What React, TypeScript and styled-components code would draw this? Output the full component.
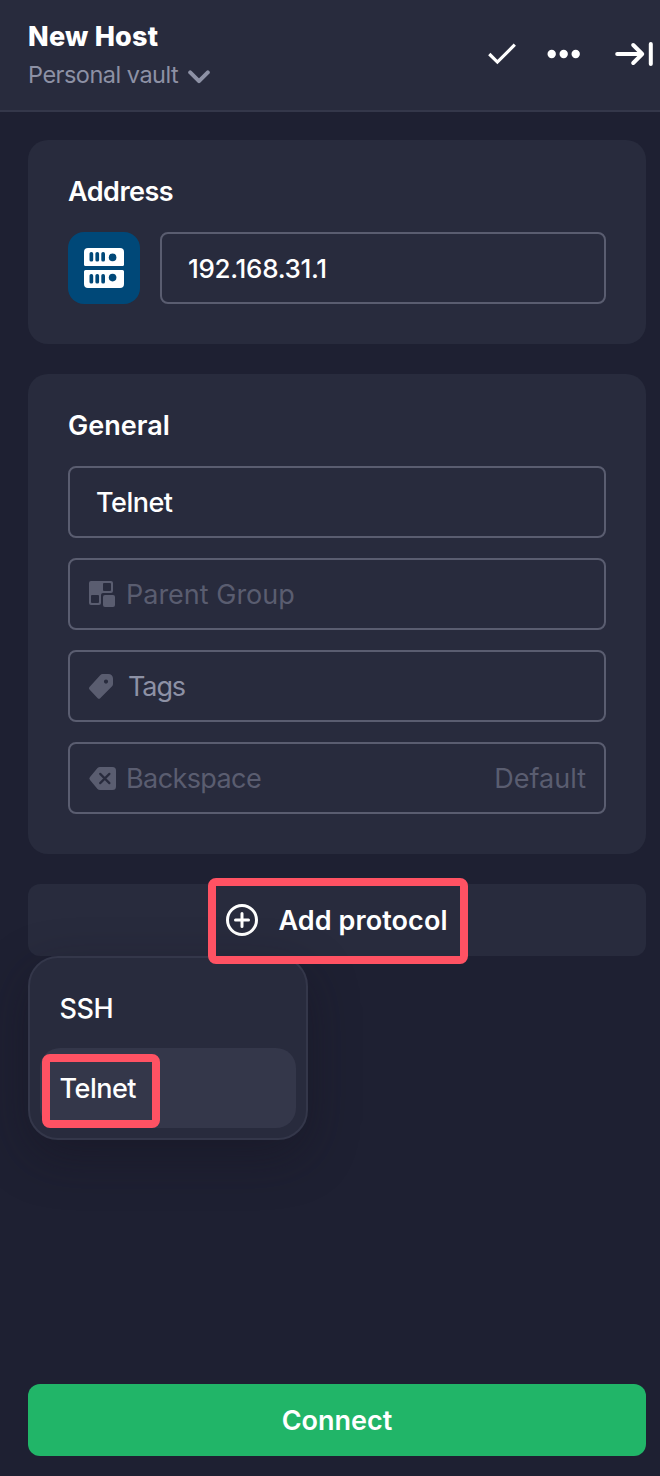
import React from 'react';
import styled, { createGlobalStyle } from 'styled-components';

const GlobalStyle = createGlobalStyle`
  * { box-sizing: border-box; }
  body {
    margin: 0;
    background: #1e2032;
    font-family: Inter, "Liberation Sans", sans-serif;
    color: #fff;
  }
`;

const Panel = styled.div`
  display: flex;
  flex-direction: column;
  width: 660px;
  height: 1476px;
  background: #1e2032;
  overflow: hidden;
`;

const Header = styled.header`
  display: flex;
  justify-content: space-between;
  height: 112px;
  padding: 0 6px 0 28px;
  background: #282b3d;
  border-bottom: 2px solid #34374a;
`;

const Heading = styled.div`
  display: flex;
  flex-direction: column;
  padding-top: 19px;
`;

const Text = styled.span<{ $size?: number; $weight?: number; $color?: string; $spacing?: number }>`
  font-size: ${p => p.$size ?? 27}px;
  font-weight: ${p => p.$weight ?? 400};
  color: ${p => p.$color ?? '#fff'};
  letter-spacing: ${p => p.$spacing ?? 0}px;
  line-height: 36px;
  white-space: nowrap;
`;

const VaultRow = styled.div`
  display: flex;
  align-items: center;
  gap: 10px;
  height: 40px;

  svg { margin-top: 4px; }
`;

const Actions = styled.div`
  display: flex;
  align-items: center;
  height: 108px;
  gap: 30px;

  svg:last-child { margin-left: 3px; }
`;

const Body = styled.main`
  display: flex;
  flex: 1;
  flex-direction: column;
  padding: 28px 14px 20px 28px;
`;

const Card = styled.section`
  display: flex;
  flex-direction: column;
  gap: 20px;
  margin-bottom: 30px;
  padding: 34px 40px 40px;
  border-radius: 20px;
  background: #282b3d;
`;

const CardTitle = styled.h2`
  display: flex;
  height: 38px;
  margin: 0;
`;

const AddressRow = styled.div`
  display: flex;
  gap: 20px;
`;

const HostIcon = styled.div`
  display: flex;
  align-items: center;
  justify-content: center;
  width: 72px;
  height: 72px;
  border-radius: 16px;
  background: #004878;
`;

const Field = styled.div<{ $icon?: boolean; $gap?: number }>`
  display: flex;
  flex: 1 0 auto;
  align-items: center;
  height: 72px;
  padding: 0 18px 0 ${p => (p.$icon ? 18 : 26)}px;
  border: 2px solid #5a5d70;
  border-radius: 8px;

  svg { margin-right: ${p => p.$gap ?? 10}px; }
  span { padding-top: 2px; }
`;

const Value = styled.div`
  display: flex;
  margin-left: auto;
`;

const ProtocolArea = styled.div`
  position: relative;
  display: flex;
  flex-direction: column;
`;

const AddButton = styled.div`
  display: flex;
  align-items: center;
  height: 72px;
  padding-left: 197px;
  gap: 19.5px;
  border-radius: 12px;
  background: #282b3d;

  span { padding-top: 2px; }
`;

const Menu = styled.div`
  position: absolute;
  top: 72px;
  left: 0;
  width: 280px;
  padding: 10px;
  border: 2px solid #34374a;
  border-radius: 30px;
  background: #282b3d;
  box-shadow: 0 16px 50px rgba(20, 18, 30, 0.4);
`;

const MenuItem = styled.div<{ $active?: boolean }>`
  display: flex;
  align-items: center;
  height: 80px;
  padding: 2px 0 0 19.5px;
  border-radius: 20px;
  background: ${p => (p.$active ? '#34374a' : 'transparent')};
`;

const Highlight = styled.div<{ $x: number; $y: number; $w: number; $h: number }>`
  position: absolute;
  left: ${p => p.$x}px;
  top: ${p => p.$y}px;
  width: ${p => p.$w}px;
  height: ${p => p.$h}px;
  border: 8px solid #ff5263;
  border-radius: 8px;
`;

const ConnectButton = styled.div`
  display: flex;
  align-items: center;
  justify-content: center;
  height: 72px;
  margin-top: auto;
  padding-top: 2px;
  border-radius: 12px;
  background: #21b568;
`;

const muted = '#5a5d70';
const soft = '#8d91a5';

const Chevron = () => (
  <svg width="22" height="14" viewBox="0 0 22 14" fill="none" stroke={soft} strokeWidth="4" strokeLinecap="round" strokeLinejoin="round">
    <path d="M2.2 2.4 11 11.2 19.8 2.4" />
  </svg>
);

const Check = () => (
  <svg width="30" height="24" viewBox="0 0 30 24" fill="none" stroke="#fff" strokeWidth="3.2">
    <path d="M2.3 12 10.4 20.1 27.8 2.7" />
  </svg>
);

const Dots = () => (
  <svg width="34" height="10" viewBox="0 0 34 10" fill="#fff">
    <circle cx="4.7" cy="5" r="4.2" />
    <circle cx="16.7" cy="5" r="4.2" />
    <circle cx="28.7" cy="5" r="4.2" />
  </svg>
);

const Collapse = () => (
  <svg width="40" height="26" viewBox="0 0 40 26" fill="none" stroke="#fff" strokeWidth="4" strokeLinecap="round" strokeLinejoin="round">
    <path d="M3.2 13H28M19.2 4 28.2 13l-9 9M36.8 3v20" />
  </svg>
);

const ServerUnit = ({ y, flip }: { y: number; flip?: boolean }) => (
  <g transform={`translate(0 ${y})`}>
    <path
      fill="#fff"
      d={flip
        ? 'M1.5 0h37A1.5 1.5 0 0 1 40 1.5V14a4 4 0 0 1-4 4H4a4 4 0 0 1-4-4V1.5A1.5 1.5 0 0 1 1.5 0z'
        : 'M4 0h32a4 4 0 0 1 4 4v12.5a1.5 1.5 0 0 1-1.5 1.5h-37A1.5 1.5 0 0 1 0 16.5V4a4 4 0 0 1 4-4z'}
    />
    {[5.5, 11.4, 17.3].map(x => (
      <rect key={x} x={x} y="4" width="3.7" height="9.6" rx="1.7" fill="#004878" />
    ))}
    <circle cx="28.6" cy={flip ? 7.6 : 9.4} r="3.8" fill="#004878" />
  </g>
);

const Server = () => (
  <svg width="40" height="40" viewBox="0 0 40 40">
    <ServerUnit y={0} />
    <ServerUnit y={22} flip />
  </svg>
);

const GroupIcon = () => (
  <svg width="28" height="28" viewBox="0 0 28 28" fill={muted}>
    <path
      fillRule="evenodd"
      d="M3 1h20a2 2 0 0 1 2 2v8a2 2 0 0 1-2 2H15a2 2 0 0 0-2 2v8a2 2 0 0 1-2 2H3a2 2 0 0 1-2-2V3a2 2 0 0 1 2-2zM16 3a1 1 0 0 0-1 1v6a1 1 0 0 0 1 1h6a1 1 0 0 0 1-1V4a1 1 0 0 0-1-1zM4 15a1 1 0 0 0-1 1v6a1 1 0 0 0 1 1h6a1 1 0 0 0 1-1v-6a1 1 0 0 0-1-1z"
    />
    <rect x="15" y="15" width="12" height="12" rx="2" />
  </svg>
);

const TagIcon = () => (
  <svg width="28" height="28" viewBox="0 0 28 28" fill={muted}>
    <path
      fillRule="evenodd"
      d="M12.4 2.9Q13.3 2 14.6 2H20.5a4.5 4.5 0 0 1 4.5 4.5v5.6q0 1.3-.9 2.2L12.2 26.2a1.8 1.8 0 0 1-2.5 0L1.5 17.6a1.8 1.8 0 0 1 0-2.5zM18 7.5a2.1 2.1 0 1 0 0 4.2 2.1 2.1 0 0 0 0-4.2z"
    />
  </svg>
);

const BackspaceIcon = () => (
  <svg width="28" height="28" viewBox="0 0 28 28">
    <path fill={muted} d="M12 3h12.5a3.5 3.5 0 0 1 3.5 3.5v16a3.5 3.5 0 0 1-3.5 3.5H12q-1.5 0-2.5-1L2 16a2.2 2.2 0 0 1 0-3L9.5 4q1-1 2.5-1z" />
    <path d="m12.2 9.9 9.2 9.2m0-9.2-9.2 9.2" stroke="#282b3d" strokeWidth="2.2" strokeLinecap="round" />
  </svg>
);

const PlusCircle = () => (
  <svg width="34" height="34" viewBox="0 0 34 34" fill="none" stroke="#fff" strokeWidth="3" strokeLinecap="round">
    <circle cx="17" cy="17" r="14.5" />
    <path d="M17 10.5v13M10.5 17h13" />
  </svg>
);

export default function App() {
  return (
    <>
      <GlobalStyle />
      <Panel>
        <Header>
          <Heading>
            <Text $weight={800} $spacing={0.22}>New Host</Text>
            <VaultRow>
              <Text $size={23.5} $color={soft} $spacing={-0.5}>Personal vault</Text>
              <Chevron />
            </VaultRow>
          </Heading>
          <Actions>
            <Check />
            <Dots />
            <Collapse />
          </Actions>
        </Header>
        <Body>
          <Card>
            <CardTitle><Text $weight={600} $spacing={-0.5}>Address</Text></CardTitle>
            <AddressRow>
              <HostIcon><Server /></HostIcon>
              <Field><Text $size={26} $weight={500} $spacing={-0.3}>192.168.31.1</Text></Field>
            </AddressRow>
          </Card>
          <Card>
            <CardTitle><Text $weight={600}>General</Text></CardTitle>
            <Field><Text $weight={500} $spacing={-0.5}>Telnet</Text></Field>
            <Field $icon><GroupIcon /><Text $color={muted}>Parent Group</Text></Field>
            <Field $icon $gap={12}><TagIcon /><Text $color={soft} $spacing={-1.1}>Tags</Text></Field>
            <Field $icon>
              <BackspaceIcon />
              <Text $color={muted} $spacing={-0.6}>Backspace</Text>
              <Value><Text $color={muted}>Default</Text></Value>
            </Field>
          </Card>
          <ProtocolArea>
            <AddButton>
              <PlusCircle />
              <Text $weight={600} $spacing={0.08}>Add protocol</Text>
            </AddButton>
            <Menu>
              <MenuItem><Text $weight={500} $spacing={-0.4}>SSH</Text></MenuItem>
              <MenuItem $active><Text $weight={500} $spacing={-0.5}>Telnet</Text></MenuItem>
            </Menu>
            <Highlight $x={180} $y={-6} $w={260} $h={86} />
            <Highlight $x={14} $y={170} $w={118} $h={74} />
          </ProtocolArea>
          <ConnectButton><Text $weight={600}>Connect</Text></ConnectButton>
        </Body>
      </Panel>
    </>
  );
}
